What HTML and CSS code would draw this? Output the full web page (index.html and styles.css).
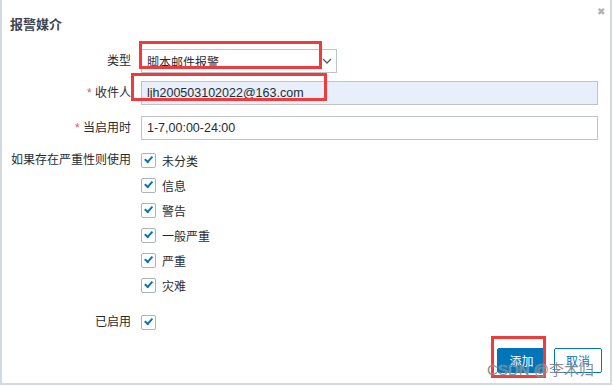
FILE: index.html
```html
<!DOCTYPE html>
<html lang="zh">
<head>
    <meta charset="UTF-8">
    <title>报警媒介</title>
    <link rel="stylesheet" href="styles.css">
</head>
<body>
    <div class="dialog">
        <div class="dialog-head">
            <h4>报警媒介</h4>
            <span class="btn-close">&#10006;</span>
        </div>

        <div class="form-grid">
            <label class="form-label">类型</label>
            <div class="form-field">
                <div class="select">
                    <span>脚本邮件报警</span>
                    <svg class="select-arrow" width="10" height="6" viewBox="0 0 10 6"><path d="M1 1l4 4 4-4" fill="none" stroke="#4f5b66" stroke-width="1.3"/></svg>
                </div>
                <div class="mark mark-type"></div>
            </div>

            <label class="form-label"><span class="req">*</span> 收件人</label>
            <div class="form-field">
                <div class="text-input text-input-focus">ljh200503102022@163.com</div>
                <div class="mark mark-to"></div>
            </div>

            <label class="form-label row-spaced"><span class="req">*</span> 当启用时</label>
            <div class="form-field row-spaced">
                <div class="text-input">1-7,00:00-24:00</div>
            </div>

            <label class="form-label label-list">如果存在严重性则使用</label>
            <div class="form-field">
                <ul class="check-list">
                    <li><span class="checkbox"></span>未分类</li>
                    <li><span class="checkbox"></span>信息</li>
                    <li><span class="checkbox"></span>警告</li>
                    <li><span class="checkbox"></span>一般严重</li>
                    <li><span class="checkbox"></span>严重</li>
                    <li><span class="checkbox"></span>灾难</li>
                </ul>
            </div>

            <label class="form-label label-enabled">已启用</label>
            <div class="form-field field-enabled">
                <span class="checkbox"></span>
            </div>
        </div>

        <div class="dialog-foot">
            <div class="btn-wrap">
                <button class="btn btn-primary">添加</button>
                <div class="mark mark-add"></div>
            </div>
            <button class="btn btn-alt">取消</button>
            <span class="watermark">CSDN @李木归</span>
        </div>
    </div>
</body>
</html>
```

FILE: styles.css
```css
* {
    margin: 0;
    padding: 0;
    box-sizing: border-box;
}

body {
    font-family: "Liberation Sans", Arial, "Noto Sans CJK SC", sans-serif;
    font-size: 12px;
    color: #1f2c33;
    background: #ffffff;
}

.dialog {
    width: 612px;
    height: 385px;
    border-left: 2px solid #d3d9de;
    border-right: 2px solid #d3d9de;
    border-bottom: 2px solid #d3d9de;
    position: relative;
    display: flex;
    flex-direction: column;
}

.dialog-head {
    height: 40px;
    padding: 14px 0 0 8px;
}

.dialog-head h4 {
    font-size: 13px;
    font-weight: bold;
    color: #3b4650;
}

.btn-close {
    position: absolute;
    top: 6px;
    right: 5px;
    font-size: 10px;
    color: #aab4bd;
}

.form-grid {
    display: grid;
    grid-template-columns: 129px 1fr;
    column-gap: 10px;
    row-gap: 8px;
    padding-top: 9px;
    padding-right: 12px;
}

.form-label {
    text-align: right;
    line-height: 24px;
    white-space: nowrap;
}

.req {
    color: #e45959;
}

.row-spaced {
    margin-top: 3px;
}

.label-list {
    line-height: 25px;
}

.form-field {
    position: relative;
}

.select {
    width: 196px;
    height: 24px;
    border: 1px solid #bdc3c9;
    padding: 0 5px;
    display: flex;
    align-items: center;
    justify-content: space-between;
}

.select-arrow {
    margin-right: -1px;
}

.text-input {
    height: 24px;
    border: 1px solid #bdc3c9;
    padding: 0 5px;
    line-height: 22px;
    font-size: 12.5px;
}

.text-input-focus {
    background: #e8eefa;
}

.check-list {
    list-style: none;
}

.check-list li {
    display: flex;
    align-items: center;
    height: 25px;
}

.checkbox {
    width: 15px;
    height: 15px;
    border: 1px solid #aab4bd;
    border-radius: 2px;
    margin-right: 6px;
    flex: none;
    position: relative;
    background: #ffffff;
}

.checkbox::after {
    content: "";
    position: absolute;
    left: 3px;
    top: 2px;
    width: 6px;
    height: 3px;
    border-left: 2px solid #0275b8;
    border-bottom: 2px solid #0275b8;
    transform: rotate(-48deg);
    transform-origin: 4px 3px;
}

.label-enabled {
    margin-top: 4px;
}

.field-enabled {
    display: flex;
    align-items: center;
    height: 24px;
    margin-top: 4px;
}

.dialog-foot {
    margin-top: auto;
    display: flex;
    justify-content: flex-end;
    gap: 8px;
    padding: 0 8px 10px 0;
    position: relative;
}

.btn-wrap {
    position: relative;
}

.btn {
    height: 25px;
    padding: 0 8px;
    font-family: inherit;
    font-size: 12px;
    border-radius: 2px;
}

.btn-primary {
    width: 49px;
    background: #0275b8;
    color: #ffffff;
    border: 1px solid #0275b8;
}

.btn-alt {
    width: 48px;
    background: #ffffff;
    color: #0275b8;
    border: 1px solid #0275b8;
}

.mark {
    position: absolute;
    border: 3px solid #ee3b3b;
    pointer-events: none;
}

.mark-type {
    left: -2px;
    top: -8px;
    width: 183px;
    height: 28px;
}

.mark-to {
    left: -10px;
    top: -8px;
    width: 196px;
    height: 28px;
}

.mark-add {
    left: -6px;
    top: -12px;
    width: 55px;
    height: 42px;
}

.watermark {
    position: absolute;
    right: 16px;
    bottom: 4px;
    font-size: 15px;
    line-height: 18px;
    color: rgba(95, 100, 105, 0.75);
    text-shadow: 0 0 1px rgba(255, 255, 255, 0.8);
    pointer-events: none;
}
```
